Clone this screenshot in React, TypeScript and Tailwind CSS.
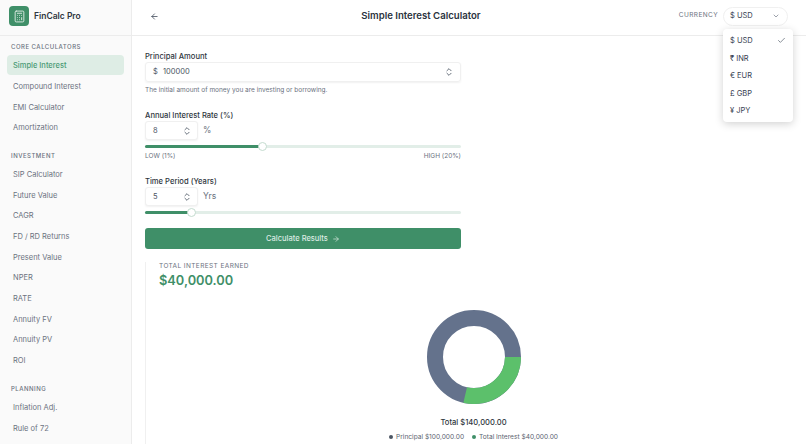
import { ArrowLeft, ArrowRight, Calculator, Check, ChevronDown, ChevronsUpDown } from "lucide-react"

const sections = [
  { title: "CORE CALCULATORS", items: ["Simple Interest", "Compound Interest", "EMI Calculator", "Amortization"] },
  {
    title: "INVESTMENT",
    items: ["SIP Calculator", "Future Value", "CAGR", "FD / RD Returns", "Present Value", "NPER", "RATE", "Annuity FV", "Annuity PV", "ROI"],
  },
  { title: "PLANNING", items: ["Inflation Adj.", "Rule of 72"] },
]

const currencies = ["$ USD", "₹ INR", "€ EUR", "£ GBP", "¥ JPY"]

function Sidebar() {
  return (
    <aside className="w-[132px] shrink-0 border-r border-[#ececec] bg-[#fafafa] overflow-hidden">
      <div className="h-[36px] flex items-center gap-[5px] pl-[9px] pb-[3px] border-b border-[#ececec]">
        <div className="w-[20px] h-[20px] rounded-[4px] bg-[#3f8f68] flex items-center justify-center">
          <Calculator className="w-[13px] h-[13px] text-[#dcebe3]" strokeWidth={1.75} />
        </div>
        <span className="text-[8.5px] font-semibold text-[#2f3640]">FinCalc Pro</span>
      </div>
      <div className="pt-[5px] px-[7px]">
        {sections.map((s) => (
          <div key={s.title} className="mb-[13px]">
            <div className="h-[11px] leading-[11px] pl-[4px] text-[6px] font-medium tracking-[0.5px] text-[#6b7280]">{s.title}</div>
            <div className="flex flex-col gap-[1px] mt-[3px]">
              {s.items.map((item) => (
                <div
                  key={item}
                  className={
                    item === "Simple Interest"
                      ? "h-[19.7px] flex items-center pl-[6px] pt-[2px] rounded-[4px] bg-[#deede5] text-[7.5px] font-medium text-[#4b9a75]"
                      : "h-[19.7px] flex items-center pl-[6px] pt-[2px] text-[7.5px] text-[#6b7280]"
                  }
                >
                  {item}
                </div>
              ))}
            </div>
          </div>
        ))}
      </div>
    </aside>
  )
}

function NumberBox({ value }: { value: string }) {
  return (
    <div className="w-[53px] h-[19px] rounded-[3px] border border-[#f0f0f0] bg-white shadow-[0_1px_2px_rgba(0,0,0,0.06)] flex items-center justify-between pl-[7px] pr-[5px]">
      <span className="text-[7.5px] text-[#4b5563]">{value}</span>
      <ChevronsUpDown className="w-[10px] h-[10px] text-[#4b5563]" strokeWidth={2} />
    </div>
  )
}

function Slider({ percent }: { percent: string }) {
  return (
    <div className="relative h-[3px] rounded-full bg-[#e2eee8]">
      <div className={`h-full rounded-full bg-[#3f8f68] ${percent}`} />
    </div>
  )
}

function Thumb({ className }: { className: string }) {
  return <div className={`absolute top-[-3px] w-[9px] h-[9px] rounded-full bg-white border border-[#c4dccf] ${className}`} />
}

function Donut() {
  return (
    <svg width="96" height="96" viewBox="0 0 96 96">
      <circle cx="48" cy="48" r="39" fill="none" stroke="#64728c" strokeWidth="16" />
      <path d="M87 48 A39 39 0 0 1 39.2 86" fill="none" stroke="#5cc06b" strokeWidth="16" />
    </svg>
  )
}

export default function App() {
  return (
    <div className="relative flex h-screen w-full overflow-hidden bg-white font-['Inter',sans-serif]">
      <Sidebar />
      <main className="flex-1 min-w-0">
        <header className="h-[36px] flex items-center justify-between pl-[18px] pr-[18px] pb-[3px] border-b border-[#ececec]">
          <ArrowLeft className="w-[9px] h-[9px] text-[#374151]" strokeWidth={2} />
          <h1 className="ml-[4px] text-[9.6px] font-semibold text-[#2b3340]">Simple Interest Calculator</h1>
          <div className="flex items-center gap-[5px]">
            <span className="text-[6.5px] tracking-[0.4px] text-[#6b7280]">CURRENCY</span>
            <div className="w-[65px] h-[19px] rounded-full border border-[#f0f0f0] flex items-center justify-between pl-[6px] pr-[7px]">
              <span className="text-[7.5px] text-[#374151]">$ USD</span>
              <ChevronDown className="w-[8px] h-[8px] text-[#6b7280]" />
            </div>
          </div>
        </header>

        <div className="pl-[13px] w-[329px] pt-[15px]">
          <label className="block h-[11px] leading-[11px] text-[7.6px] font-medium text-[#2f3640]">Principal Amount</label>
          <div className="h-[20px] rounded-[3px] border border-[#f0f0f0] shadow-[0_1px_2px_rgba(0,0,0,0.06)] flex items-center pl-[7px] pr-[6px]">
            <span className="text-[7.5px] text-[#4b5563] w-[10px]">$</span>
            <span className="text-[7.5px] text-[#4b5563] flex-1">100000</span>
            <ChevronsUpDown className="w-[10px] h-[10px] text-[#4b5563]" strokeWidth={2} />
          </div>
          <p className="mt-[4px] h-[9px] leading-[9px] text-[6.5px] text-[#6b7280]">The initial amount of money you are investing or borrowing.</p>

          <label className="block mt-[15px] h-[11px] leading-[11px] text-[7.6px] font-medium text-[#2f3640]">Annual Interest Rate (%)</label>
          <div className="flex items-center gap-[5px]">
            <NumberBox value="8" />
            <span className="text-[8.5px] text-[#6b7280]">%</span>
          </div>
          <div className="relative mt-[5px]">
            <Slider percent="w-[37%]" />
            <Thumb className="left-[113px]" />
          </div>
          <div className="mt-[4px] h-[9px] leading-[9px] flex justify-between text-[6.5px] text-[#6b7280]">
            <span>LOW (1%)</span>
            <span>HIGH (20%)</span>
          </div>

          <label className="block mt-[15px] h-[11px] leading-[11px] text-[7.6px] font-medium text-[#2f3640]">Time Period (Years)</label>
          <div className="flex items-center gap-[5px]">
            <NumberBox value="5" />
            <span className="text-[8.5px] text-[#6b7280]">Yrs</span>
          </div>
          <div className="relative mt-[5px]">
            <Slider percent="w-[14%]" />
            <Thumb className="left-[42px]" />
          </div>

          <button className="mt-[14px] w-full h-[21px] rounded-[3px] bg-[#3f8f68] flex items-center justify-center gap-[4px] text-[7.5px] font-medium text-[#dcebe3]">
            Calculate Results
            <ArrowRight className="w-[8px] h-[8px]" strokeWidth={2} />
          </button>
        </div>

        <section className="ml-[13px] mt-[13px] w-[659px] border-l border-[#f0f0f0] pl-[13px] pb-[20px]">
          <div className="h-[9px] leading-[9px] text-[6.5px] tracking-[0.4px] text-[#6b7280]">TOTAL INTEREST EARNED</div>
          <div className="mt-[1px] h-[18px] leading-[18px] text-[12.8px] font-semibold text-[#3f8f68]">$40,000.00</div>
          <div className="mt-[19px] flex flex-col items-center pr-[16px]">
            <Donut />
            <div className="mt-[11.5px] h-[11px] leading-[11px] text-[7.6px] font-medium text-[#2f3640]">Total $140,000.00</div>
            <div className="mt-[5px] flex items-center gap-[8px] text-[6.6px] text-[#5b6470]">
              <span className="flex items-center gap-[3px]">
                <span className="w-[4px] h-[4px] rounded-full bg-[#4b5563]" />
                Principal $100,000.00
              </span>
              <span className="flex items-center gap-[3px]">
                <span className="w-[4px] h-[4px] rounded-full bg-[#3f8f68]" />
                Total Interest $40,000.00
              </span>
            </div>
          </div>
        </section>
      </main>

      {/* Currency menu */}
      <div className="absolute left-[723px] top-[29px] w-[70px] rounded-[4px] bg-white shadow-[0_2px_8px_rgba(0,0,0,0.18)] pt-[3px] pb-[2px]">
        {currencies.map((c) => (
          <div key={c} className="h-[17.5px] flex items-center justify-between pl-[7px] pr-[7px] text-[7.5px] text-[#374151]">
            {c}
            {c === "$ USD" && <Check className="w-[9px] h-[9px] text-[#4b5563]" strokeWidth={1.75} />}
          </div>
        ))}
      </div>
    </div>
  )
}
